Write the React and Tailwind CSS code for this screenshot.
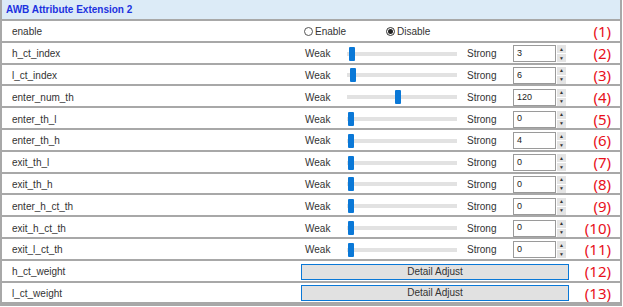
const rows = [
  { label: "h_ct_index", value: "3", pos: 2 },
  { label: "l_ct_index", value: "6", pos: 3 },
  { label: "enter_num_th", value: "120", pos: 48 },
  { label: "enter_th_l", value: "0", pos: 1 },
  { label: "enter_th_h", value: "4", pos: 1 },
  { label: "exit_th_l", value: "0", pos: 1 },
  { label: "exit_th_h", value: "0", pos: 1 },
  { label: "enter_h_ct_th", value: "0", pos: 1 },
  { label: "exit_h_ct_th", value: "0", pos: 1 },
  { label: "exit_l_ct_th", value: "0", pos: 1 },
];

function Num({ n }) {
  return (
    <div className="flex-1 pr-[9px] text-right text-[15px] leading-none text-[#e8101a] [font-family:'Noto_Sans','Liberation_Sans',sans-serif]">
      ({n})
    </div>
  );
}

function Row({ children }) {
  return (
    <div className="box-border flex h-[21.8px] items-center border-b-2 border-[#a8a8a8] pt-[2px]">
      {children}
    </div>
  );
}

function Label({ text }) {
  return <div className="w-[298px] pl-[10px] text-[10px] text-[#333]">{text}</div>;
}

function Spin({ value }) {
  return (
    <div className="flex h-[17px] items-stretch">
      <div className="box-border flex w-[43px] items-center border border-[#9a9a9a] bg-white pl-[3px] text-[9px] text-[#222]">
        {value}
      </div>
      <div className="ml-[1px] flex w-[9px] flex-col gap-[1px]">
        <div className="flex flex-1 items-center justify-center bg-[#e4e4e4] text-[5px] leading-none text-[#333]">▲</div>
        <div className="flex flex-1 items-center justify-center bg-[#e4e4e4] text-[5px] leading-none text-[#333]">▼</div>
      </div>
    </div>
  );
}

export default function App() {
  return (
    <div className="h-[307px] w-[623px] bg-white [font-family:'Liberation_Sans',Arial,sans-serif]">
      <div className="box-border w-[622px] border-x-2 border-b-2 border-[#a8a8a8]">
        <div className="box-border flex h-[21px] items-center border-b-2 border-[#a8a8a8] bg-[#dcebf7] pl-[4px] text-[10px] font-bold text-[#1c32e0]">
          AWB Attribute Extension 2
        </div>
        <Row>
          <Label text="enable" />
          <div className="flex w-[86px] items-center gap-[2px] pl-[4px] text-[10px] text-[#333]">
            <span className="box-border h-[9px] w-[9px] rounded-full border border-[#555] bg-white" />
            Enable
          </div>
          <div className="flex items-center gap-[2px] text-[10px] text-[#333]">
            <span className="box-border flex h-[9px] w-[9px] items-center justify-center rounded-full border border-[#333] bg-white">
              <span className="h-[5px] w-[5px] rounded-full bg-[#222]" />
            </span>
            Disable
          </div>
          <Num n={1} />
        </Row>
        {rows.map((r, i) => (
          <Row key={r.label}>
            <Label text={r.label} />
            <div className="w-[47px] pl-[5px] text-[10px] text-[#333]">Weak</div>
            <div className="relative h-[14px] w-[120px]">
              <div className="absolute left-0 top-[5px] h-[4px] w-[110px] bg-[#e2e2e2]" />
              <div
                className="absolute top-0 h-[14px] w-[6px] rounded-[1px] bg-[#0a78d7]"
                style={{ left: `${r.pos}px` }}
              />
            </div>
            <div className="w-[46px] text-[10px] text-[#333]">Strong</div>
            <Spin value={r.value} />
            <Num n={i + 2} />
          </Row>
        ))}
        {["h_ct_weight", "l_ct_weight"].map((l, i) => (
          <Row key={l}>
            <Label text={l} />
            <button className="ml-[1px] box-border h-[16px] w-[268px] border border-[#0a78d7] bg-[#e1e1e1] text-[10px] leading-none text-[#333]">
              Detail Adjust
            </button>
            <Num n={12 + i} />
          </Row>
        ))}
      </div>
    </div>
  );
}
